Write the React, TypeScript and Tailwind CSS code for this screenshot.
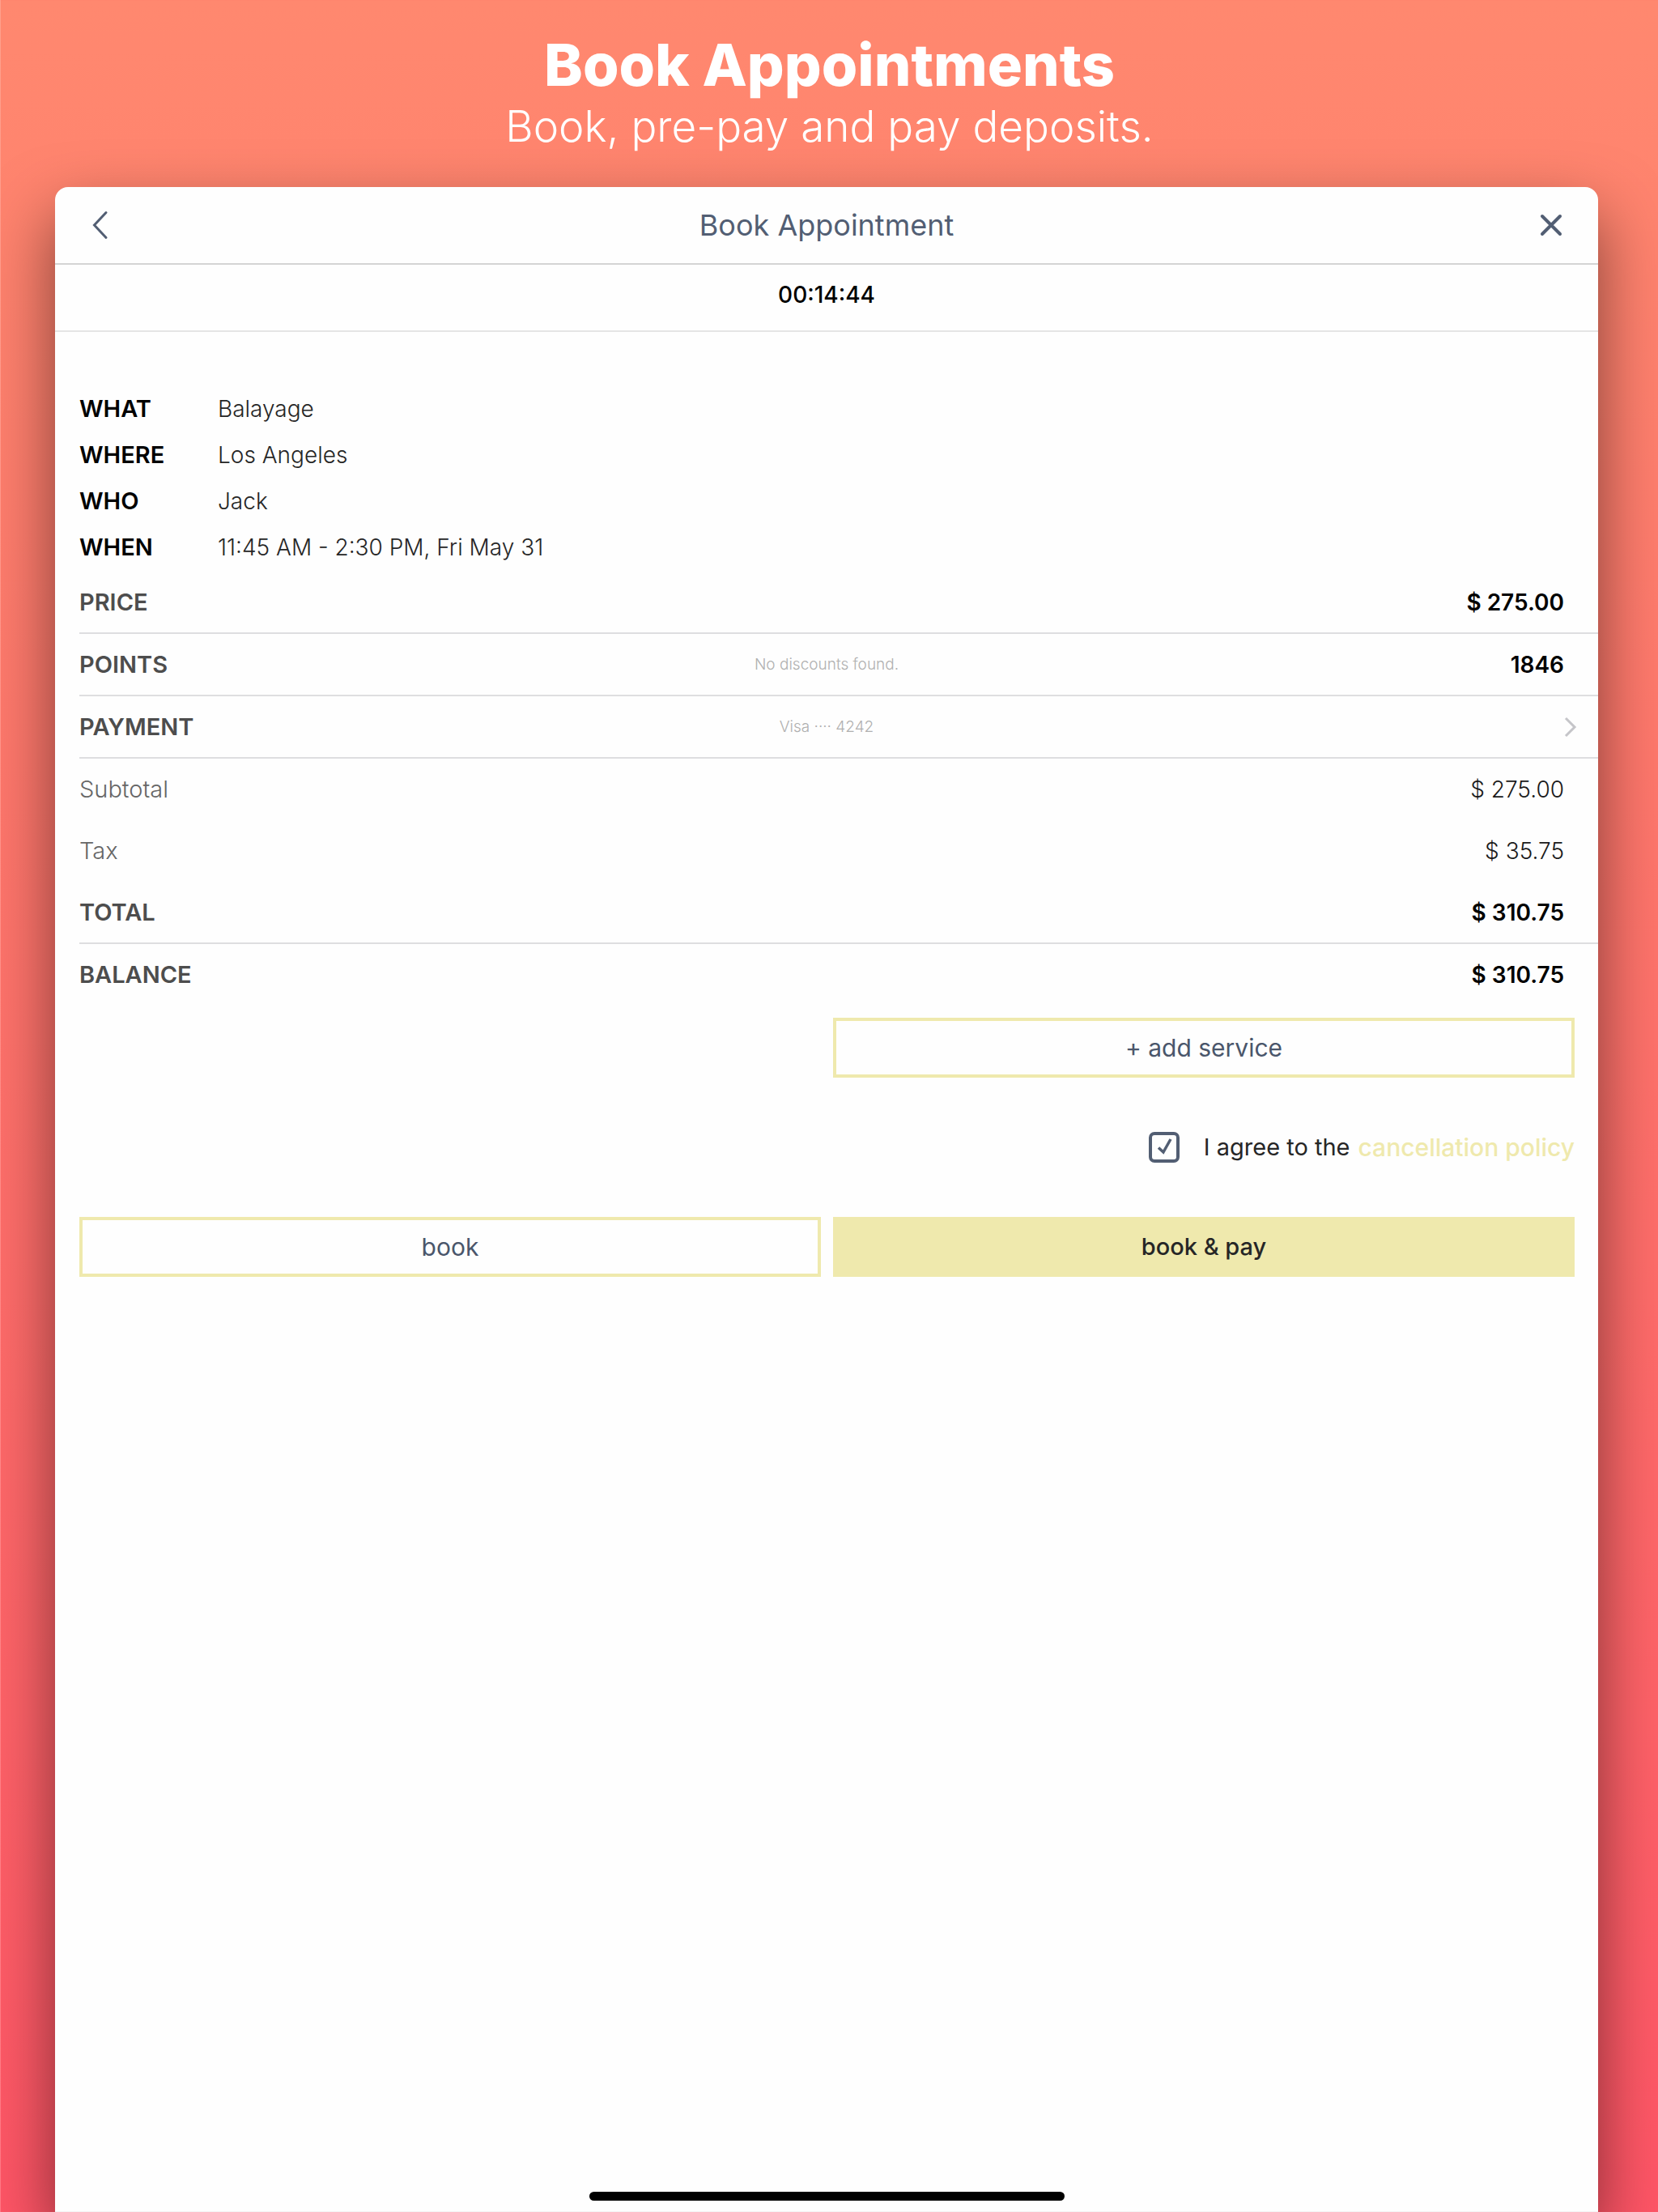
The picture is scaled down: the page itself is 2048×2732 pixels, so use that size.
import { useState } from "react";

const details = [
  { label: "WHAT", value: "Balayage" },
  { label: "WHERE", value: "Los Angeles" },
  { label: "WHO", value: "Jack" },
  { label: "WHEN", value: "11:45 AM - 2:30 PM, Fri May 31" },
];

type Line = {
  label: string;
  note?: string;
  value?: string;
  strong?: boolean;
  ruled?: boolean;
};

const lines: Line[] = [
  { label: "PRICE", value: "$ 275.00", strong: true, ruled: true },
  { label: "POINTS", note: "No discounts found.", value: "1846", strong: true, ruled: true },
  { label: "PAYMENT", note: "Visa ···· 4242", strong: true, ruled: true },
  { label: "Subtotal", value: "$ 275.00" },
  { label: "Tax", value: "$ 35.75" },
  { label: "TOTAL", value: "$ 310.75", strong: true, ruled: true },
  { label: "BALANCE", value: "$ 310.75", strong: true },
];

function PriceLine({ line }: { line: Line }) {
  return (
    <div
      className={
        "grid grid-cols-[1fr_auto_1fr] items-center " +
        (line.ruled ? "h-[77px] border-b-2 border-[#dedee0]" : "h-[76px]")
      }
    >
      <dt
        className={
          "text-[29px] " +
          (line.strong ? "font-semibold text-[#4d4d4d]" : "font-light text-[#666666]")
        }
      >
        {line.label}
      </dt>
      <dd className="pr-[30px] text-[19px] font-light text-[#b0b0b0]">{line.note}</dd>
      <dd
        className={
          "flex justify-end " +
          (line.value ? "pr-[42px] " : "pr-[26px] ") +
          (line.strong ? "font-semibold text-black" : "font-light text-[#1a1a1a]")
        }
      >
        {line.value ?? (
          <button type="button" aria-label="Change payment method">
            <svg width="16" height="26" viewBox="0 0 16 26" fill="none" stroke="#c5c5c9" strokeWidth="3">
              <path d="M2 2 13 13 2 24" />
            </svg>
          </button>
        )}
      </dd>
    </div>
  );
}

export default function App() {
  const [agreed, setAgreed] = useState(true);
  return (
    <div className="flex min-h-screen flex-col overflow-hidden border-l border-white/20 bg-linear-to-b from-[#ff886f] to-[#ff5566] font-['Inter',sans-serif] text-[28px] leading-9">
      <header className="pt-10 text-center text-white">
        <h1 className="text-[72px] leading-[80px] font-extrabold">Book Appointments</h1>
        <p className="text-[53px] leading-[72px] font-light">Book, pre-pay and pay deposits.</p>
      </header>

      <main className="mt-[39px] mr-[74px] ml-[67px] flex grow flex-col rounded-t-2xl border-b border-[#f3f3f3] bg-[#fefefe] shadow-[0_36px_80px_rgba(0,0,0,0.5)]">
        <div className="flex h-24 items-center justify-between border-b-2 border-[#d4d4d4] px-[44px] text-[#525e73]">
          <button type="button" aria-label="Back">
            <svg width="28" height="36" viewBox="0 0 28 36" fill="none" stroke="currentColor" strokeWidth="3" strokeLinecap="round">
              <path d="M19 2.500 4.500 18 19 33.500" />
            </svg>
          </button>
          <h2 className="text-[36px] leading-10">Book Appointment</h2>
          <button type="button" aria-label="Close">
            <svg width="28" height="28" viewBox="0 0 28 28" fill="none" stroke="currentColor" strokeWidth="4" strokeLinecap="round">
              <path d="M3 3 25 25M25 3 3 25" />
            </svg>
          </button>
        </div>
        <div className="flex h-[83px] items-center justify-center border-b-2 border-[#e5e5e5] pb-2 font-medium text-black">
          00:14:44
        </div>

        <dl className="grid grid-cols-[171px_1fr] gap-y-[21px] pt-[77px] pl-[30px]">
          {details.map((d) => (
            <div key={d.label} className="contents">
              <dt className="text-[29px] font-semibold text-black">{d.label}</dt>
              <dd className="font-light text-[#262626]">{d.value}</dd>
            </div>
          ))}
        </dl>

        <dl className="mt-3 ml-[30px]">
          {lines.map((line) => (
            <PriceLine key={line.label} line={line} />
          ))}
        </dl>

        <div className="mt-[15px] mr-[29px] ml-[30px] grid grid-cols-2 gap-x-[15px] text-[29px]">
          <button
            type="button"
            className="col-start-2 h-[74px] border-4 border-[#efe9ad] text-[30px] text-[#4a566b]"
          >
            + add service
          </button>
          <div className="col-span-2 flex h-[172px] items-center justify-end">
            <label className="flex items-center gap-[30px] text-[#262626]">
              <span className="grid size-[38px] place-items-center">
                <input
                  type="checkbox"
                  checked={agreed}
                  onChange={(e) => setAgreed(e.target.checked)}
                  className="col-start-1 row-start-1 size-[38px] appearance-none rounded-[7px] border-4 border-[#525e73]"
                />
                {agreed && (
                  <svg
                    className="pointer-events-none col-start-1 row-start-1"
                    width="38"
                    height="38"
                    viewBox="0 0 38 38"
                    fill="none"
                    stroke="#525e73"
                    strokeWidth="3.500"
                  >
                    <path d="M12 19.500 18 25 27 9" />
                  </svg>
                )}
              </span>
              I agree to the
            </label>
            <a href="#cancellation-policy" className="ml-[10px] text-[30px] font-medium text-[#efe9ad]">
              cancellation policy
            </a>
          </div>
          <button type="button" className="h-[74px] border-4 border-[#efe9ad] text-[30px] text-[#4a566b]">
            book
          </button>
          <button type="button" className="h-[74px] bg-[#efe9ad] font-medium text-[#262626]">
            book &amp; pay
          </button>
        </div>

        <div className="mx-auto mt-auto mb-[13px] h-[11px] w-[587px] rounded-full bg-black" />
      </main>
    </div>
  );
}
